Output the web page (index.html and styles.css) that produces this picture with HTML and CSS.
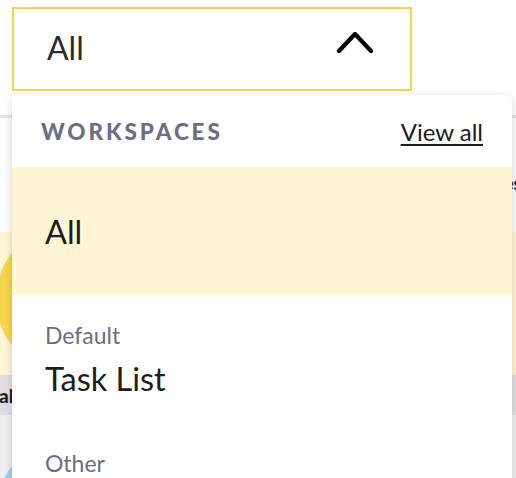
FILE: index.html
```html
<!DOCTYPE html>
<html lang="en">

<head>
    <meta charset="UTF-8">
    <meta name="viewport" content="width=device-width, initial-scale=1.0">
    <title>Workspaces</title>
    <link rel="stylesheet" href="styles.css">
</head>

<body>
    <div id="page">
        <div class="top-bar">
            <div class="picker">
                <button class="picker-box">
                    <span class="picker-value">All</span>
                    <svg class="chevron" width="38" height="22" viewBox="0 0 38 22">
                        <path d="M3 19 L19 2 L35 19" fill="none" stroke="#000" stroke-width="4.2"
                            stroke-linecap="round" stroke-linejoin="round" />
                    </svg>
                </button>
                <div class="menu">
                    <div class="menu-head">
                        <span class="menu-title">WORKSPACES</span>
                        <a class="menu-link" href="#">View all</a>
                    </div>
                    <div class="menu-item active">All</div>
                    <div class="menu-group">
                        <div class="group-label">Default</div>
                        <div class="menu-item">Task List</div>
                    </div>
                    <div class="menu-group">
                        <div class="group-label">Other</div>
                    </div>
                </div>
            </div>
        </div>

        <div class="band band-title">
            <span class="band-heading">Workspaces</span>
        </div>
        <div class="band band-hero">
            <div class="avatar yellow"></div>
        </div>
        <div class="band band-strip">
            <span class="strip-text">all</span>
        </div>
        <div class="band band-list">
            <div class="avatar blue"></div>
        </div>
    </div>
</body>

</html>
```

FILE: styles.css
```css
* {
    box-sizing: border-box;
}

body {
    margin: 0;
    font-family: Lato, "Open Sans", sans-serif;
    color: #1c1c21;
    background-color: #fff;
    overflow: hidden;
}

#page {
    width: 516px;
    height: 478px;
    overflow: hidden;
}

.top-bar {
    height: 118px;
    padding: 7px 0 0 12px;
    border-bottom: 3px solid #e3e3e6;
}

.picker {
    position: relative;
    z-index: 10;
    width: 400px;
}

.picker-box {
    display: flex;
    justify-content: space-between;
    align-items: center;
    width: 400px;
    height: 84px;
    padding: 0 36px 4px 33px;
    border: 2px solid #f7d34b;
    background-color: #fff;
    font-family: inherit;
    font-size: 32px;
    color: #2b2b30;
}

.chevron {
    margin-top: -8px;
}

/* dropdown floats above the page content */
.menu {
    position: absolute;
    top: 88px;
    left: 0;
    width: 500px;
    height: 420px;
    background-color: #fff;
    border-radius: 6px;
    box-shadow: 0 2px 8px rgba(0, 0, 0, 0.16);
    overflow: hidden;
}

.menu-head {
    display: flex;
    justify-content: space-between;
    align-items: center;
    height: 72px;
    padding: 0 29px 0 29px;
}

.menu-title {
    font-size: 22.5px;
    font-weight: 900;
    letter-spacing: 2.9px;
    color: #6b6e85;
}

.menu-link {
    font-size: 24px;
    color: #1c1c21;
    text-decoration: underline;
    text-underline-offset: 3px;
    text-decoration-thickness: 2px;
}

.menu-item {
    font-size: 32.5px;
    padding-left: 33px;
}

.menu-item.active {
    display: flex;
    align-items: center;
    height: 128px;
    background-color: #fdf5d3;
}

.menu-group {
    padding-top: 26px;
}

.menu-group+.menu-group {
    padding-top: 51px;
}

.group-label {
    font-size: 23px;
    color: #6b6e85;
    padding-left: 33px;
    margin-bottom: 10px;
}

.band {
    position: relative;
    overflow: hidden;
}

.band-title {
    display: flex;
    justify-content: flex-end;
    align-items: center;
    height: 114px;
    background-color: #fcfcfc;
}

.band-heading {
    font-size: 19px;
    font-weight: 900;
    margin-right: -6px;
    margin-top: 14px;
}

.band-hero {
    height: 143px;
    background-color: #fdf5d3;
}

.band-strip {
    display: flex;
    align-items: center;
    height: 40px;
    background-color: #dedee3;
}

.strip-text {
    font-size: 19px;
    font-weight: 900;
    margin-left: -1px;
}

.band-list {
    height: 80px;
    background-color: #efeff1;
}

.avatar {
    position: absolute;
    width: 150px;
    height: 150px;
    border-radius: 50%;
}

.avatar.yellow {
    left: -4px;
    top: -8px;
    background-color: #f7d44c;
}

.avatar.blue {
    left: -4px;
    top: 22px;
    background-color: #9fd2ee;
}
```
